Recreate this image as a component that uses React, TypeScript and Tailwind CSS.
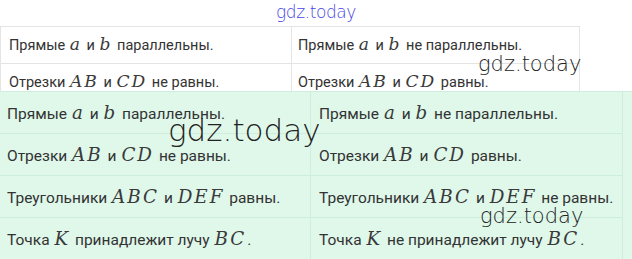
import React from 'react'

const M = ({ children }: { children: React.ReactNode }) => (
  <span className="mx-px text-[1.18em] italic tracking-[2px] text-[#3a3a3a]" style={{ fontFamily: '"DejaVu Serif", serif' }}>{children}</span>
)

const rowsTop: [React.ReactNode, React.ReactNode][] = [
  [<>Прямые <M>a</M> и <M>b</M> параллельны.</>, <>Прямые <M>a</M> и <M>b</M> не параллельны.</>],
  [<>Отрезки <M>AB</M> и <M>CD</M> не равны.</>, <>Отрезки <M>AB</M> и <M>CD</M> равны.</>],
]

const rowsGreen: [React.ReactNode, React.ReactNode][] = [
  ...rowsTop,
  [<>Треугольники <M>ABC</M> и <M>DEF</M> равны.</>, <>Треугольники <M>ABC</M> и <M>DEF</M> не равны.</>],
  [<>Точка <M>K</M> принадлежит лучу <M>BC</M>.</>, <>Точка <M>K</M> не принадлежит лучу <M>BC</M>.</>],
]

const wm = { fontFamily: '"DejaVu Sans", sans-serif' }

export default function App() {
  return (
    <div className="relative h-[259px] w-[632px] overflow-hidden bg-white text-[#333]" style={{ fontFamily: 'Roboto, "Noto Sans", sans-serif' }}>
      <div className="flex h-[26px] items-center justify-center">
        <span className="text-[17px] font-light tracking-tight text-[#4646e6]" style={wm}>gdz.today</span>
      </div>
      <div className="h-[65px] w-[580px] overflow-hidden border-x border-t border-[#e4e4e4] text-[14.5px]">
        {rowsTop.map((r, i) => (
          <div key={i} className="grid h-[37px] grid-cols-[291px_1fr] border-b border-[#e4e4e4]">
            <div className="flex items-center border-r border-[#e4e4e4] pl-[8px]"><span>{r[0]}</span></div>
            <div className="flex items-center pl-[6px]"><span>{r[1]}</span></div>
          </div>
        ))}
      </div>
      <div className="border-t border-[#cdeedc] bg-[#dff8ea] text-[15.5px]">
        <div className="w-[623px] border-r border-[#cdeedc]">
          {rowsGreen.map((r, i) => (
            <div key={i} className="grid h-[42px] grid-cols-[311px_1fr] border-b border-[#cdeedc]">
              <div className="flex items-center border-r border-[#cdeedc] pl-[7px]"><span>{r[0]}</span></div>
              <div className="flex items-center pl-[8px]"><span>{r[1]}</span></div>
            </div>
          ))}
        </div>
      </div>
      <span className="absolute left-[478px] top-[54px] text-[21px] font-light leading-none text-[#222]" style={wm}>gdz.today</span>
      <span className="absolute left-[168px] top-[115px] text-[31px] font-light leading-none text-[#222]" style={wm}>gdz.today</span>
      <span className="absolute left-[480px] top-[206px] text-[21px] font-light leading-none text-[#222]" style={wm}>gdz.today</span>
    </div>
  )
}
